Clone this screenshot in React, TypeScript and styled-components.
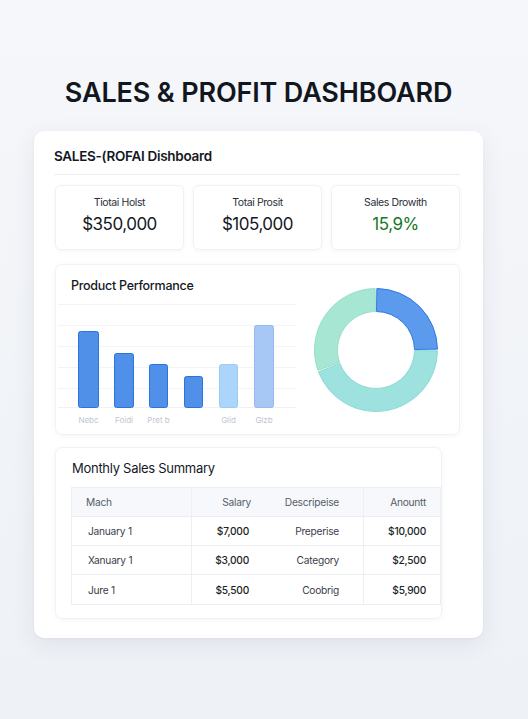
import React from "react";
import styled, { createGlobalStyle } from "styled-components";

const Global = createGlobalStyle`
  html, body { margin: 0; padding: 0; }
  body {
    background: #eff2f6;
    font-family: Inter, "Noto Sans", "Liberation Sans", sans-serif;
    color: #14181f;
  }
  * { box-sizing: border-box; }
`;

const Page = styled.div`
  width: 528px;
  min-height: 719px;
  padding-top: 77px;
  background: linear-gradient(180deg, #f5f7fa 0%, #eef1f6 100%);
`;

const PageTitle = styled.h1`
  margin: 0;
  font-size: 27px;
  line-height: 32px;
  font-weight: 600;
  text-align: center;
  color: #12161e;
  padding-right: 11px;
  letter-spacing: -0.15px;
`;

const MainCard = styled.div`
  margin: 22px 0 0 34px;
  width: 449px;
  height: 507px;
  background: #ffffff;
  border-radius: 10px;
  box-shadow: 0 6px 24px rgba(40, 55, 80, 0.08), 0 1px 3px rgba(40, 55, 80, 0.05);
  padding: 16px 23px 19px 21px;
  display: flex;
  flex-direction: column;
`;

const CardHeader = styled.div`
  font-size: 13.5px;
  line-height: 18px;
  font-weight: 600;
  letter-spacing: -0.3px;
  color: #15191f;
  margin-left: -1px;
  padding-bottom: 9px;
  border-bottom: 1px solid #eceef2;
`;

const KpiRow = styled.div`
  display: grid;
  grid-template-columns: repeat(3, 1fr);
  gap: 9px;
  margin-top: 10px;
`;

const KpiCard = styled.div`
  height: 65px;
  border-radius: 6px;
  border: 1px solid #eff1f4;
  box-shadow: 0 1px 4px rgba(40, 55, 80, 0.05);
  display: flex;
  flex-direction: column;
  align-items: center;
  padding-top: 10px;
  gap: 3px;
`;

const KpiLabel = styled.div`
  font-size: 10.5px;
  line-height: 14px;
  letter-spacing: -0.4px;
  color: #2a2f38;
`;

const KpiValue = styled.div<{ $positive?: boolean }>`
  font-size: 17px;
  line-height: 22px;
  font-weight: 400;
  letter-spacing: -0.5px;
  color: ${(p) => (p.$positive ? "#16781f" : "#14181f")};
`;

const PerfCard = styled.div`
  margin-top: 14px;
  height: 171px;
  border-radius: 7px;
  border: 1px solid #f0f2f5;
  box-shadow: 0 1px 5px rgba(40, 55, 80, 0.05);
  display: grid;
  grid-template-columns: 242px 1fr;
`;

const PerfLeft = styled.div`
  display: flex;
  flex-direction: column;
  padding-top: 12px;
`;

const SectionTitle = styled.div<{ $weight?: number; $size?: number; $indent?: number }>`
  font-size: ${(p) => p.$size ?? 12.5}px;
  line-height: 17px;
  font-weight: ${(p) => p.$weight ?? 500};
  letter-spacing: -0.28px;
  color: #15191f;
  padding-left: ${(p) => p.$indent ?? 15}px;
`;

const ChartSvg = styled.svg`
  display: block;
  margin-top: 7px;
`;

const PerfRight = styled.div`
  display: flex;
  align-items: center;
  padding-left: 15px;
`;

const SalesCard = styled.div`
  margin-top: 12px;
  width: 387px;
  height: 172px;
  border-radius: 7px;
  border: 1px solid #f0f2f5;
  box-shadow: 0 1px 5px rgba(40, 55, 80, 0.05);
  padding: 12px 0 14px 15px;
  display: flex;
  flex-direction: column;
`;

const Table = styled.div`
  margin-top: 10px;
  border: 1px solid #eceef1;
  display: grid;
  grid-template-columns: 119px 72px 100px 1fr;
`;

const Cell = styled.div<{
  $header?: boolean;
  $align?: "left" | "right";
  $pad: number;
  $divider?: boolean;
  $strong?: boolean;
  $last?: boolean;
}>`
  height: 29px;
  display: flex;
  align-items: center;
  justify-content: ${(p) => (p.$align === "right" ? "flex-end" : "flex-start")};
  padding: ${(p) => (p.$align === "right" ? `0 ${p.$pad}px 0 0` : `0 0 0 ${p.$pad}px`)};
  font-size: 10.2px;
  letter-spacing: -0.25px;
  background: ${(p) => (p.$header ? "#f6f8fb" : "#ffffff")};
  color: ${(p) => (p.$header ? "#555c68" : p.$strong ? "#1b1f27" : "#3b404b")};
  font-weight: ${(p) => (p.$strong ? 500 : 400)};
  border-left: ${(p) => (p.$divider ? `1px solid ${p.$header ? "#eef0f3" : "#eceef1"}` : "none")};
  border-bottom: ${(p) => (p.$last ? "none" : "1px solid #eceef1")};
`;

const bars = [
  { x: 22, w: 21, top: 30, fill: "#5090e8", stroke: "#2a74e0", label: "Nebc" },
  { x: 58, w: 20, top: 52, fill: "#5090e8", stroke: "#2a74e0", label: "Foidi" },
  { x: 93, w: 19, top: 63, fill: "#5090e8", stroke: "#2a74e0", label: "Pret b" },
  { x: 128, w: 19, top: 75, fill: "#5090e8", stroke: "#2a74e0", label: "" },
  { x: 163, w: 19, top: 63, fill: "#acd5fb", stroke: "#9ccbf7", label: "Glid" },
  { x: 198, w: 20, top: 24, fill: "#a7c7f5", stroke: "#95baf1", label: "Glzb" },
];

const BarChart = () => (
  <ChartSvg width={242} height={128} viewBox="0 0 242 128">
    {[3, 24, 45, 66, 87].map((y) => (
      <line key={y} x1={2} x2={240} y1={y + 0.5} y2={y + 0.5} stroke="#f2f4f7" strokeWidth={1} />
    ))}
    <line x1={2} x2={240} y1={106.5} y2={106.5} stroke="#eff1f4" strokeWidth={1} />
    {bars.map((b, i) => (
      <g key={i}>
        <rect
          x={b.x + 0.5}
          y={b.top + 0.5}
          width={b.w - 1}
          height={106 - b.top}
          rx={2}
          fill={b.fill}
          stroke={b.stroke}
          strokeWidth={1}
        />
        {b.label && (
          <text
            x={b.x + b.w / 2}
            y={122}
            textAnchor="middle"
            fontSize={8}
            fill="#c0c6cf"
            fontFamily="Inter, 'Liberation Sans', sans-serif"
          >
            {b.label}
          </text>
        )}
      </g>
    ))}
  </ChartSvg>
);

const seg = (cx: number, cy: number, r0: number, r1: number, a0: number, a1: number) => {
  const pt = (r: number, a: number) => {
    const rad = (a * Math.PI) / 180;
    return [cx + r * Math.sin(rad), cy - r * Math.cos(rad)];
  };
  const large = a1 - a0 > 180 ? 1 : 0;
  const [ox0, oy0] = pt(r1, a0);
  const [ox1, oy1] = pt(r1, a1);
  const [ix1, iy1] = pt(r0, a1);
  const [ix0, iy0] = pt(r0, a0);
  return `M${ox0} ${oy0} A${r1} ${r1} 0 ${large} 1 ${ox1} ${oy1} L${ix1} ${iy1} A${r0} ${r0} 0 ${large} 0 ${ix0} ${iy0} Z`;
};

const Donut = () => {
  const c = 63;
  const segs = [
    { a0: 0.8, a1: 89.2, fill: "#5b9aec", stroke: "#2f7ae4" },
    { a0: 90.8, a1: 249.2, fill: "#9de2df", stroke: "#8cd9d6" },
    { a0: 250.8, a1: 359.2, fill: "#a6e6d3", stroke: "#97dfca" },
  ];
  return (
    <svg width={126} height={126} viewBox="0 0 126 126">
      {segs.map((s, i) => (
        <path key={i} d={seg(c, c, 38.5, 61.5, s.a0, s.a1)} fill={s.fill} stroke={s.stroke} strokeWidth={1} />
      ))}
    </svg>
  );
};

const rows = [
  ["January 1", "$7,000", "Preperise", "$10,000"],
  ["Xanuary 1", "$3,000", "Category", "$2,500"],
  ["Jure 1", "$5,500", "Coobrig", "$5,900"],
];

export default function App() {
  return (
    <Page>
      <Global />
      <PageTitle>SALES &amp; PROFIT DASHBOARD</PageTitle>
      <MainCard>
        <CardHeader>SALES-(ROFAI Dishboard</CardHeader>
        <KpiRow>
          <KpiCard>
            <KpiLabel>Tiotai Holst</KpiLabel>
            <KpiValue>$350,000</KpiValue>
          </KpiCard>
          <KpiCard>
            <KpiLabel>Totai Prosit</KpiLabel>
            <KpiValue>$105,000</KpiValue>
          </KpiCard>
          <KpiCard>
            <KpiLabel>Sales Drowith</KpiLabel>
            <KpiValue $positive>15,9%</KpiValue>
          </KpiCard>
        </KpiRow>
        <PerfCard>
          <PerfLeft>
            <SectionTitle>Product Performance</SectionTitle>
            <BarChart />
          </PerfLeft>
          <PerfRight>
            <Donut />
          </PerfRight>
        </PerfCard>
        <SalesCard>
          <SectionTitle $size={13} $weight={400} $indent={1}>
            Monthly Sales Summary
          </SectionTitle>
          <Table>
            <Cell $header $pad={14}>Mach</Cell>
            <Cell $header $align="right" $pad={12} $divider>Salary</Cell>
            <Cell $header $align="right" $pad={24}>Descripeise</Cell>
            <Cell $header $align="right" $pad={14} $divider>Anountt</Cell>
            {rows.map((r, i) => {
              const last = i === rows.length - 1;
              return (
                <React.Fragment key={i}>
                  <Cell $pad={16} $last={last}>{r[0]}</Cell>
                  <Cell $align="right" $pad={14} $divider $strong $last={last}>{r[1]}</Cell>
                  <Cell $align="right" $pad={24} $last={last}>{r[2]}</Cell>
                  <Cell $align="right" $pad={14} $divider $strong $last={last}>{r[3]}</Cell>
                </React.Fragment>
              );
            })}
          </Table>
        </SalesCard>
      </MainCard>
    </Page>
  );
}
